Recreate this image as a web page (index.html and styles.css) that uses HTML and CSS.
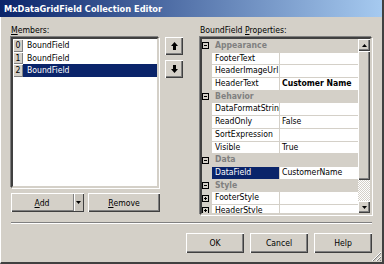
FILE: index.html
```html
<!DOCTYPE html>
<html lang="en">
<head>
    <meta charset="UTF-8">
    <title>MxDataGridField Collection Editor</title>
    <link rel="stylesheet" href="styles.css">
</head>
<body>
    <div class="window">
        <div class="titlebar">MxDataGridField Collection Editor</div>

        <div class="panes">
            <!-- Members list -->
            <div class="pane">
                <div class="label"><u>M</u>embers:</div>
                <div class="members-row">
                    <div class="listbox">
                        <div class="item"><span class="idx">0</span><span class="item-name">BoundField</span></div>
                        <div class="item"><span class="idx">1</span><span class="item-name">BoundField</span></div>
                        <div class="item selected"><span class="idx">2</span><span class="item-name">BoundField</span></div>
                    </div>
                    <div class="movers">
                        <div class="btn mover">
                            <svg width="7" height="8" viewBox="0 0 7 8"><polygon points="3.5,0 7,4 5,4 5,8 2,8 2,4 0,4" fill="#000"/></svg>
                        </div>
                        <div class="btn mover">
                            <svg width="7" height="8" viewBox="0 0 7 8"><polygon points="2,0 5,0 5,4 7,4 3.5,8 0,4 2,4" fill="#000"/></svg>
                        </div>
                    </div>
                </div>
                <div class="actions">
                    <div class="btn split">
                        <span class="split-main"><u>A</u>dd</span>
                        <span class="split-arrow">
                            <svg width="5" height="3" viewBox="0 0 5 3"><polygon points="0,0 5,0 2.5,3" fill="#000"/></svg>
                        </span>
                    </div>
                    <div class="btn remove"><u>R</u>emove</div>
                </div>
            </div>

            <!-- Property grid -->
            <div class="pane">
                <div class="label">BoundField <u>P</u>roperties:</div>
                <div class="propgrid">
                    <div class="props">
                        <div class="row cat"><span class="gutter"><svg class="box" width="7" height="7" viewBox="0 0 7 7"><rect x="0.5" y="0.5" width="6" height="6" fill="none" stroke="#000"/><line x1="2" y1="3.5" x2="5" y2="3.5" stroke="#000"/></svg></span><span class="cat-name">Appearance</span></div>
                        <div class="row"><span class="gutter"></span><span class="pname">FooterText</span><span class="pval"></span></div>
                        <div class="row"><span class="gutter"></span><span class="pname">HeaderImageUrl</span><span class="pval"></span></div>
                        <div class="row"><span class="gutter"></span><span class="pname">HeaderText</span><span class="pval strong">Customer Name</span></div>
                        <div class="row cat"><span class="gutter"><svg class="box" width="7" height="7" viewBox="0 0 7 7"><rect x="0.5" y="0.5" width="6" height="6" fill="none" stroke="#000"/><line x1="2" y1="3.5" x2="5" y2="3.5" stroke="#000"/></svg></span><span class="cat-name">Behavior</span></div>
                        <div class="row"><span class="gutter"></span><span class="pname">DataFormatString</span><span class="pval"></span></div>
                        <div class="row"><span class="gutter"></span><span class="pname">ReadOnly</span><span class="pval">False</span></div>
                        <div class="row"><span class="gutter"></span><span class="pname">SortExpression</span><span class="pval"></span></div>
                        <div class="row"><span class="gutter"></span><span class="pname">Visible</span><span class="pval">True</span></div>
                        <div class="row cat"><span class="gutter"><svg class="box" width="7" height="7" viewBox="0 0 7 7"><rect x="0.5" y="0.5" width="6" height="6" fill="none" stroke="#000"/><line x1="2" y1="3.5" x2="5" y2="3.5" stroke="#000"/></svg></span><span class="cat-name">Data</span></div>
                        <div class="row"><span class="gutter"></span><span class="pname selected">DataField</span><span class="pval">CustomerName</span></div>
                        <div class="row cat"><span class="gutter"><svg class="box" width="7" height="7" viewBox="0 0 7 7"><rect x="0.5" y="0.5" width="6" height="6" fill="none" stroke="#000"/><line x1="2" y1="3.5" x2="5" y2="3.5" stroke="#000"/></svg></span><span class="cat-name">Style</span></div>
                        <div class="row"><span class="gutter"><svg class="box" width="7" height="7" viewBox="0 0 7 7"><rect x="0.5" y="0.5" width="6" height="6" fill="none" stroke="#000"/><line x1="2" y1="3.5" x2="5" y2="3.5" stroke="#000"/><line x1="3.5" y1="2" x2="3.5" y2="5" stroke="#000"/></svg></span><span class="pname">FooterStyle</span><span class="pval"></span></div>
                        <div class="row"><span class="gutter"><svg class="box" width="7" height="7" viewBox="0 0 7 7"><rect x="0.5" y="0.5" width="6" height="6" fill="none" stroke="#000"/><line x1="2" y1="3.5" x2="5" y2="3.5" stroke="#000"/><line x1="3.5" y1="2" x2="3.5" y2="5" stroke="#000"/></svg></span><span class="pname">HeaderStyle</span><span class="pval"></span></div>
                    </div>
                    <div class="scrollbar">
                        <div class="btn sb-btn">
                            <svg width="5" height="3" viewBox="0 0 5 3"><polygon points="2.5,0 5,3 0,3" fill="#000"/></svg>
                        </div>
                        <div class="btn sb-thumb"></div>
                        <div class="sb-track"></div>
                        <div class="btn sb-btn">
                            <svg width="5" height="3" viewBox="0 0 5 3"><polygon points="0,0 5,0 2.5,3" fill="#000"/></svg>
                        </div>
                    </div>
                </div>
            </div>
        </div>

        <div class="separator"></div>

        <div class="footer">
            <div class="btn dlg-btn">OK</div>
            <div class="btn dlg-btn">Cancel</div>
            <div class="btn dlg-btn">Help</div>
        </div>

        <svg class="grip" width="11" height="11" viewBox="0 0 11 11">
            <line x1="10" y1="1" x2="1" y2="10" stroke="#fff"/>
            <line x1="10" y1="2" x2="2" y2="10" stroke="#808080"/>
            <line x1="10" y1="5" x2="5" y2="10" stroke="#fff"/>
            <line x1="10" y1="6" x2="6" y2="10" stroke="#808080"/>
            <line x1="10" y1="9" x2="9" y2="10" stroke="#808080"/>
        </svg>
    </div>
</body>
</html>
```

FILE: styles.css
```css
* {
    box-sizing: border-box;
    margin: 0;
    padding: 0;
}

body {
    background-color: #d4d0c8;
    font-family: 'DejaVu Sans Condensed', 'DejaVu Sans', sans-serif;
    font-stretch: condensed;
    font-size: 8.6px;
    color: #000;
}

.window {
    position: relative;
    width: 384px;
    height: 264px;
    background-color: #d4d0c8;
    border-left: 1px solid #fff;
    border-right: 2px solid #404040;
    border-bottom: 2px solid #404040;
    padding: 0 10px 0 10px;
}

.titlebar {
    height: 17px;
    margin: 0 -10px 0 -11px;
    padding-left: 4px;
    background: linear-gradient(to right, #0a246a, #a6caf0);
    color: #fff;
    font-weight: bold;
    font-size: 9.2px;
    line-height: 17px;
    white-space: nowrap;
}

.panes {
    display: flex;
    gap: 17px;
    padding-top: 8px;
}

.pane {
    width: 172px;
}

.label {
    height: 12px;
    line-height: 11px;
}

/* Members list */

.members-row {
    display: flex;
    gap: 6px;
}

.listbox {
    width: 148px;
    height: 151px;
    background-color: #fff;
    border: 2px solid;
    border-color: #404040 #d4d0c8 #d4d0c8 #404040;
    box-shadow: -1px -1px 0 #808080, 1px 1px 0 #fff;
}

.item {
    display: flex;
    height: 12.6px;
    line-height: 12.6px;
}

.idx {
    width: 10px;
    text-align: center;
    background-color: #d4d0c8;
    box-shadow: inset 1px 1px #fff, inset -1px -1px #808080;
}

.item-name {
    flex: 1;
    padding-left: 4px;
}

.item.selected .item-name {
    background-color: #0a246a;
    color: #fff;
}

.btn {
    background-color: #d4d0c8;
    box-shadow: inset 1px 1px #fff, inset -1px -1px #404040, inset -2px -2px #808080;
    display: flex;
    align-items: center;
    justify-content: center;
}

.movers {
    display: flex;
    flex-direction: column;
    gap: 5px;
}

.mover {
    width: 18px;
    height: 18px;
}

.actions {
    display: flex;
    gap: 4px;
    margin-top: 5px;
}

.split {
    width: 73px;
    height: 19px;
    justify-content: flex-start;
}

.split-main {
    width: 62px;
    text-align: center;
}

.split-arrow {
    width: 10px;
    height: 17px;
    display: flex;
    align-items: center;
    justify-content: center;
    background-color: #c8c4bc;
    border-left: 1px solid #808080;
    box-shadow: inset 1px 0 #fff;
}

.remove {
    width: 72px;
    height: 19px;
}

/* Property grid */

.propgrid {
    display: flex;
    height: 178px;
    border: 2px solid;
    border-color: #404040 #d4d0c8 #d4d0c8 #404040;
    box-shadow: -1px -1px 0 #808080, 1px 1px 0 #fff;
}

.props {
    flex: 1;
    overflow: hidden;
    background-color: #d4d0c8;
    padding-top: 1px;
}

.row {
    display: flex;
    height: 11.7px;
    margin-bottom: 1px;
    line-height: 11.7px;
    white-space: nowrap;
}

.gutter {
    width: 10px;
    flex-shrink: 0;
    display: flex;
    align-items: center;
}

.box {
    display: block;
}

.cat-name {
    padding-left: 3px;
    font-weight: bold;
    color: #808080;
}

.pname {
    width: 67px;
    flex-shrink: 0;
    overflow: hidden;
    padding-left: 3px;
    background-color: #fff;
}

.pname.selected {
    background-color: #0a246a;
    color: #fff;
}

.pval {
    flex: 1;
    margin-left: 1px;
    padding-left: 2px;
    overflow: hidden;
    background-color: #fff;
}

.pval.strong {
    font-weight: bold;
}

.scrollbar {
    width: 12px;
    display: flex;
    flex-direction: column;
}

.sb-btn {
    height: 12px;
}

.sb-thumb {
    height: 129px;
}

.sb-track {
    flex: 1;
    background: repeating-conic-gradient(#fff 0 25%, #d4d0c8 0 50%) 0 0 / 2px 2px;
}

/* Bottom */

.separator {
    margin-top: 7px;
    height: 2px;
    border-top: 1px solid #808080;
    border-bottom: 1px solid #fff;
}

.footer {
    display: flex;
    justify-content: flex-end;
    gap: 6px;
    margin-top: 9px;
}

.dlg-btn {
    width: 58px;
    height: 20px;
}

.grip {
    position: absolute;
    right: 0;
    bottom: 0;
}
```
